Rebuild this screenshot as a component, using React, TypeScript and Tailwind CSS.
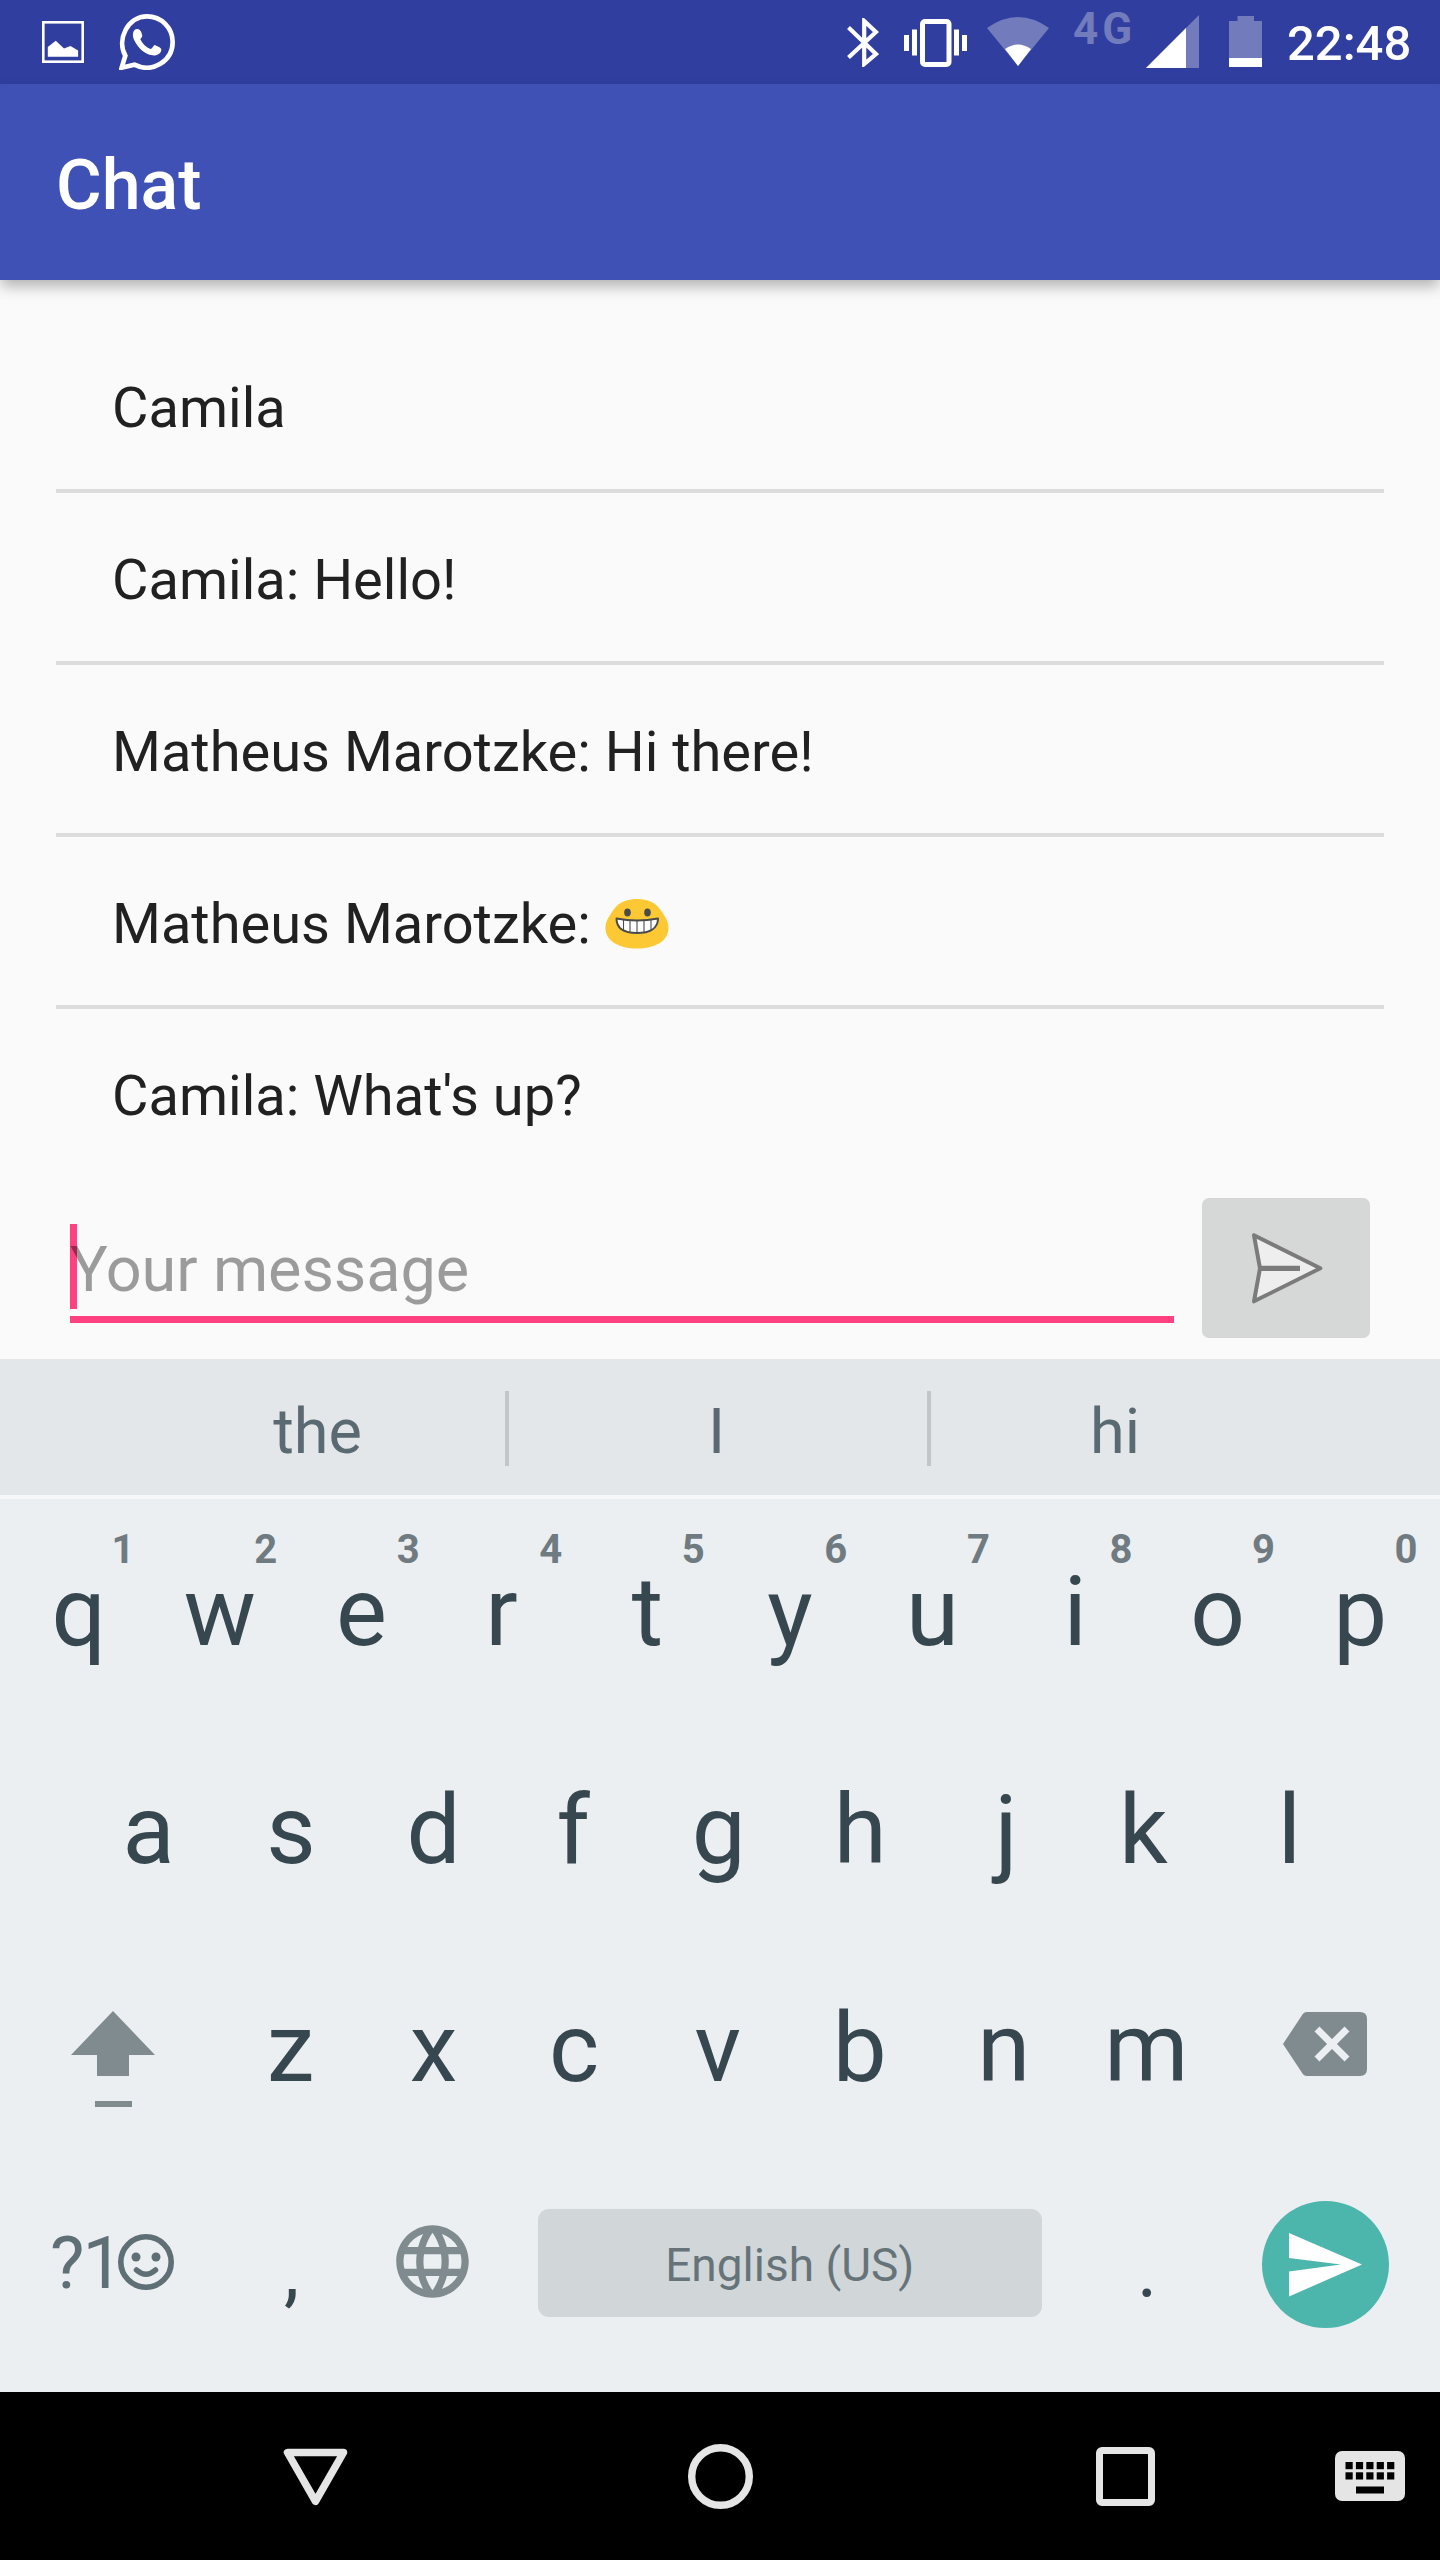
import React from "react";
import { MdLanguage } from "react-icons/md";

const messages = ["Camila", "Camila: Hello!", "Matheus Marotzke: Hi there!", "Matheus Marotzke: ", "Camila: What's up?"];
const topRow = ["q", "w", "e", "r", "t", "y", "u", "i", "o", "p"];
const homeRow = ["a", "s", "d", "f", "g", "h", "j", "k", "l"];
const bottomRow = ["z", "x", "c", "v", "b", "n", "m"];

const opticalShift: Record<string, string> = {
  q: "pl-[3px]",
  r: "pr-[7px]",
  f: "pr-[6px]",
  k: "pr-[6px]",
  c: "pr-[4px]",
  e: "pr-[2px]",
  h: "pr-[2px]",
  b: "pr-[3px]",
  v: "pr-[2px]",
  z: "pr-[1px]",
  j: "pl-[5px]",
  l: "pl-[1px]",
};

function StatusBar() {
  return (
    <div className="flex h-[84px] items-start bg-[#303f9f] text-white">
      <svg className="ml-[42px] mt-[21px] h-[42px] w-[42px]" viewBox="0 0 42 42" fill="none">
        <rect x="1.3" y="1.3" width="39.4" height="39.4" stroke="#fff" strokeWidth="2.6" />
        <path d="M5.8 35.7V26l8-6.2 8.2 7.7 6.5-2.4 7.6 4.4v6.2z" fill="#fff" />
      </svg>
      <svg className="ml-[35px] mt-[14px] h-[56px] w-[56px]" viewBox="0 0 168 168" fill="none">
        <path d="M8 161L19 125C-8 77 26 7 84 7c43 0 77 34 77 77 0 57-60 95-115 68z" stroke="#fff" strokeWidth="14" />
        <path d="M55 45C43 44 38 62 45 77c12 25 31 43 55 47 14 2 27-6 27-17-1-7-11-10-20-14-4 1-8 13-13 12C80 100 70 88 64 76c1-4 6-6 6-11-2-7-4-19-15-20z" fill="#fff" />
      </svg>
      <div className="flex-1" />
      <svg className="mt-[18px] h-[49px] w-[32px]" viewBox="0 0 32 49" fill="none" stroke="#fff" strokeWidth="4.2">
        <path d="M1.5 9.5L29 36 17.2 46V3L29 14 1.5 39.5" />
      </svg>
      <svg className="ml-[25px] mt-[19px] h-[48px] w-[63px]" viewBox="0 0 63 48" fill="#fff">
        <rect x="18.5" y="2.5" width="26.5" height="43" rx="2.5" fill="none" stroke="#fff" strokeWidth="5" />
        <rect x="0" y="16" width="5" height="16" />
        <rect x="8" y="10.500" width="5" height="26" />
        <rect x="50" y="10.500" width="5" height="26" />
        <rect x="58" y="16" width="5" height="16" />
      </svg>
      <svg className="ml-[20px] mt-[17px] h-[49px] w-[62px]" viewBox="0 0 62 49">
        <path d="M0 11Q31-11 62 11L31 49z" fill="#727bbc" />
        <path d="M18 32Q31 23 44 32L31 49z" fill="#fff" />
      </svg>
      <span className="ml-[24px] mt-[8px] w-[60px] text-[44px] font-bold leading-[42px] tracking-[4px] text-[#727bbc]">4G</span>
      <svg className="ml-[13px] mt-[15px] h-[53px] w-[53px]" viewBox="0 0 53 53">
        <path d="M0 53L53 0V53z" fill="#727bbc" />
        <path d="M0 53L40 13V53z" fill="#fff" />
      </svg>
      <svg className="ml-[30px] mt-[16px] h-[51px] w-[33px]" viewBox="0 0 33 51">
        <path d="M8.500 0H25V5H33V51H0V5H8.500z" fill="#727bbc" />
        <rect y="42" width="33" height="9" fill="#fff" />
      </svg>
      <span className="ml-[25px] mr-[28px] mt-[17px] w-[125px] text-[49px] font-medium leading-[54px]">22:48</span>
    </div>
  );
}

function GrinEmoji() {
  return (
    <svg className="ml-[0.5px] mt-[8px] h-[50px] w-[64px]" viewBox="0 0 64 50">
      <path d="M32 0C45 0 52 5 57 13c4 6 6.500 10 6.500 16C63.500 42 50 49.500 32 49.500S.5 42 .5 29c0-6 2.500-10 6.500-16C12 5 19 0 32 0z" fill="#fcc934" />
      <ellipse cx="22.500" cy="13.500" rx="3.300" ry="4" fill="#4b4b4b" />
      <ellipse cx="42.500" cy="13.500" rx="3.300" ry="4" fill="#4b4b4b" />
      <path d="M11.500 19.500Q32 23.500 53 19.500C53 29 45 34 32 34S11.500 29 11.500 19.500z" fill="#fff" stroke="#4b4b4b" strokeWidth="2" strokeLinejoin="round" />
      <path d="M18.500 21V31M25 22V33.500M32 22V34M39 22V33.500M46 21V31" stroke="#4b4b4b" strokeWidth="1.100" />
    </svg>
  );
}

function Key({ label, hint }: { label: string; hint?: string }) {
  return (
    <div className="relative flex h-[218px] w-[142.55px] justify-center pt-[48px] text-[96px] leading-[112px] text-[#37474f]">
      <span className={opticalShift[label]}>{label}</span>
      {hint && <span className="absolute right-[14px] top-[18px] text-[40px] font-bold leading-[47px] text-[#6f7b81]">{hint}</span>}
    </div>
  );
}

function Keyboard() {
  return (
    <div className="flex h-[893px] flex-col bg-[#ebeff2] pl-[6px] pr-[8.5px] pt-[9px]">
      <div className="flex">
        {topRow.map((k, i) => (
          <Key key={k} label={k} hint={String((i + 1) % 10)} />
        ))}
      </div>
      <div className="flex justify-center">
        {homeRow.map((k) => (
          <Key key={k} label={k} />
        ))}
      </div>
      <div className="flex">
        <div className="w-[213.8px] pl-[65px] pt-[67px]">
          <svg className="h-[96px] w-[84px]" viewBox="0 0 84 96" fill="#808b90">
            <path d="M42 0L84 44H58V65H26V44H0z" />
            <rect x="24" y="90" width="37" height="6" />
          </svg>
        </div>
        {bottomRow.map((k) => (
          <Key key={k} label={k} />
        ))}
        <div className="pl-[65px] pt-[68px]">
          <svg className="h-[64px] w-[84px]" viewBox="0 0 84 64">
            <path d="M24 0H77Q84 0 84 7V57Q84 64 77 64H24Q20.500 64 18.500 60L0 32 18.500 4Q20.500 0 24 0z" fill="#808b90" />
            <path d="M34 17L64 47M64 17L34 47" stroke="#ebeff2" strokeWidth="7" />
          </svg>
        </div>
      </div>
      <div className="flex h-[218px]">
        <div className="flex w-[214.2px] pl-[44px] pt-[58px] text-[73px] leading-[86px] text-[#5f6f76]">
          <span className="w-[68px] whitespace-nowrap tracking-[-2px]">?1</span>
          <svg className="mt-[14px] h-[56px] w-[56px]" viewBox="0 0 56 56" fill="none" stroke="#5f6f76">
            <circle cx="28" cy="28" r="25.200" strokeWidth="5.600" />
            <circle cx="18" cy="23" r="4.500" fill="#5f6f76" stroke="none" />
            <circle cx="38" cy="23" r="4.500" fill="#5f6f76" stroke="none" />
            <path d="M18.500 36Q28 44.500 37.500 36" strokeWidth="5.500" strokeLinecap="round" />
          </svg>
        </div>
        <div className="flex w-[142.8px] justify-center pt-[53px] text-[77px] leading-[112px] text-[#37474f]">,</div>
        <div className="w-[142.8px] pl-[25.8px] pt-[56px]">
          <MdLanguage className="h-[87px] w-[87px] text-[#808b90]" />
        </div>
        <div className="ml-[32px] mt-[47px] flex h-[108px] w-[504px] justify-center rounded-[11px] bg-[#d1d6d9] pt-[29px] text-[46px] leading-[54px] text-[#667479]">
          English (US)
        </div>
        <div className="ml-[34px] flex w-[142.8px] justify-center pt-[53px] text-[77px] leading-[112px] text-[#37474f]">.</div>
        <div className="ml-[43.500px] mt-[39px] h-[127px] w-[127px] rounded-full bg-[#4db6ac]">
          <svg className="h-[127px] w-[127px]" viewBox="0 0 127 127">
            <path d="M27 32L100 63.500 27 95.500V70.500L79 63.500 27 57z" fill="#fff" />
          </svg>
        </div>
      </div>
    </div>
  );
}

function NavBar() {
  return (
    <div className="flex h-[168px] bg-black pt-[52px]">
      <svg className="ml-[283px] h-[65px] w-[65px]" viewBox="0 0 65 65" fill="none">
        <path d="M4.500 8.500H60.500L32.500 57.300z" stroke="#e5e5e5" strokeWidth="7.500" strokeLinejoin="round" />
      </svg>
      <svg className="ml-[340px] h-[65px] w-[65px]" viewBox="0 0 65 65" fill="none">
        <circle cx="32.500" cy="32.500" r="28.800" stroke="#e5e5e5" strokeWidth="7.400" />
      </svg>
      <div className="ml-[343px] mt-[3px] h-[59px] w-[59px] rounded-[6px] border-[7px] border-[#e5e5e5]">
        <div className="h-full w-full bg-black" />
      </div>
      <svg className="ml-[180px] mt-[7px] h-[50px] w-[70px]" viewBox="0 0 70 50">
        <rect width="70" height="50" rx="7" fill="#e5e5e5" />
        {[0, 1].map((r) =>
          [0, 1, 2, 3, 4].map((c) => <rect key={`${r}-${c}`} x={10.5 + c * 10.4} y={11 + r * 10.3} width="7.200" height="7.200" />)
        )}
        <rect x="21" y="35.500" width="28" height="7" />
      </svg>
    </div>
  );
}

export default function App() {
  return (
    <div className="flex h-[2560px] w-[1440px] flex-col overflow-hidden bg-[#fafafa] font-['Roboto',sans-serif]">
      <StatusBar />
      <header className="relative h-[196px] bg-[#3f51b5] pl-[56px] pt-[60px] text-[70px] font-medium leading-[82px] text-white shadow-[0_7px_14px_-1px_rgba(0,0,0,0.3)]">
        Chat
      </header>
      <main className="flex h-[1079px] flex-col px-[56px] pt-[41px]">
        {messages.map((m, i) => (
          <div key={m} className={i < 4 ? "box-content h-[168px] border-b-4 border-[#dcdcdc]" : "h-[168px]"}>
            <div className="flex items-start whitespace-pre pl-[56px] pt-[54px] text-[56px] leading-[66px] text-[#212121]">
              {m}
              {i === 3 && <GrinEmoji />}
            </div>
          </div>
        ))}
        <div className="flex pl-[14px]">
          <div className="relative mt-[47px] h-[99px] w-[1104px] border-b-[7px] border-[#ff4081]">
            <div className="absolute left-0 top-0 h-[85px] w-[7px] bg-[#ff4081]" />
            <div className="relative pt-[9px] text-[63px] leading-[74px] tracking-[-0.1px] text-black/38">Your message</div>
          </div>
          <div className="ml-[28px] mt-[21px] h-[140px] w-[168px] rounded-[7px] bg-[#d6d7d7]">
            <svg className="h-[140px] w-[168px]" viewBox="0 0 504 420" fill="none" stroke="#7b7b7b" strokeLinejoin="round">
              <path d="M156 112L355 211 156 310 174 211z" fill="#eee" strokeWidth="12" />
              <path d="M174 211H294" strokeWidth="16" />
            </svg>
          </div>
        </div>
      </main>
      <div className="flex h-[140px] border-b-4 border-[#f5f7f8] bg-[#e3e7e9] pt-[32px] text-[63px] leading-[74px] text-[#5a6a72]">
        <div className="ml-[130px] w-[375px] pt-[4px] text-center">the</div>
        <div className="h-[75px] w-[4px] bg-[#c2c6c9]" />
        <div className="w-[418px] pr-[3px] pt-[4px] text-center">I</div>
        <div className="h-[75px] w-[4px] bg-[#c2c6c9]" />
        <div className="w-[368px] pt-[4px] text-center">hi</div>
      </div>
      <Keyboard />
      <NavBar />
    </div>
  );
}
